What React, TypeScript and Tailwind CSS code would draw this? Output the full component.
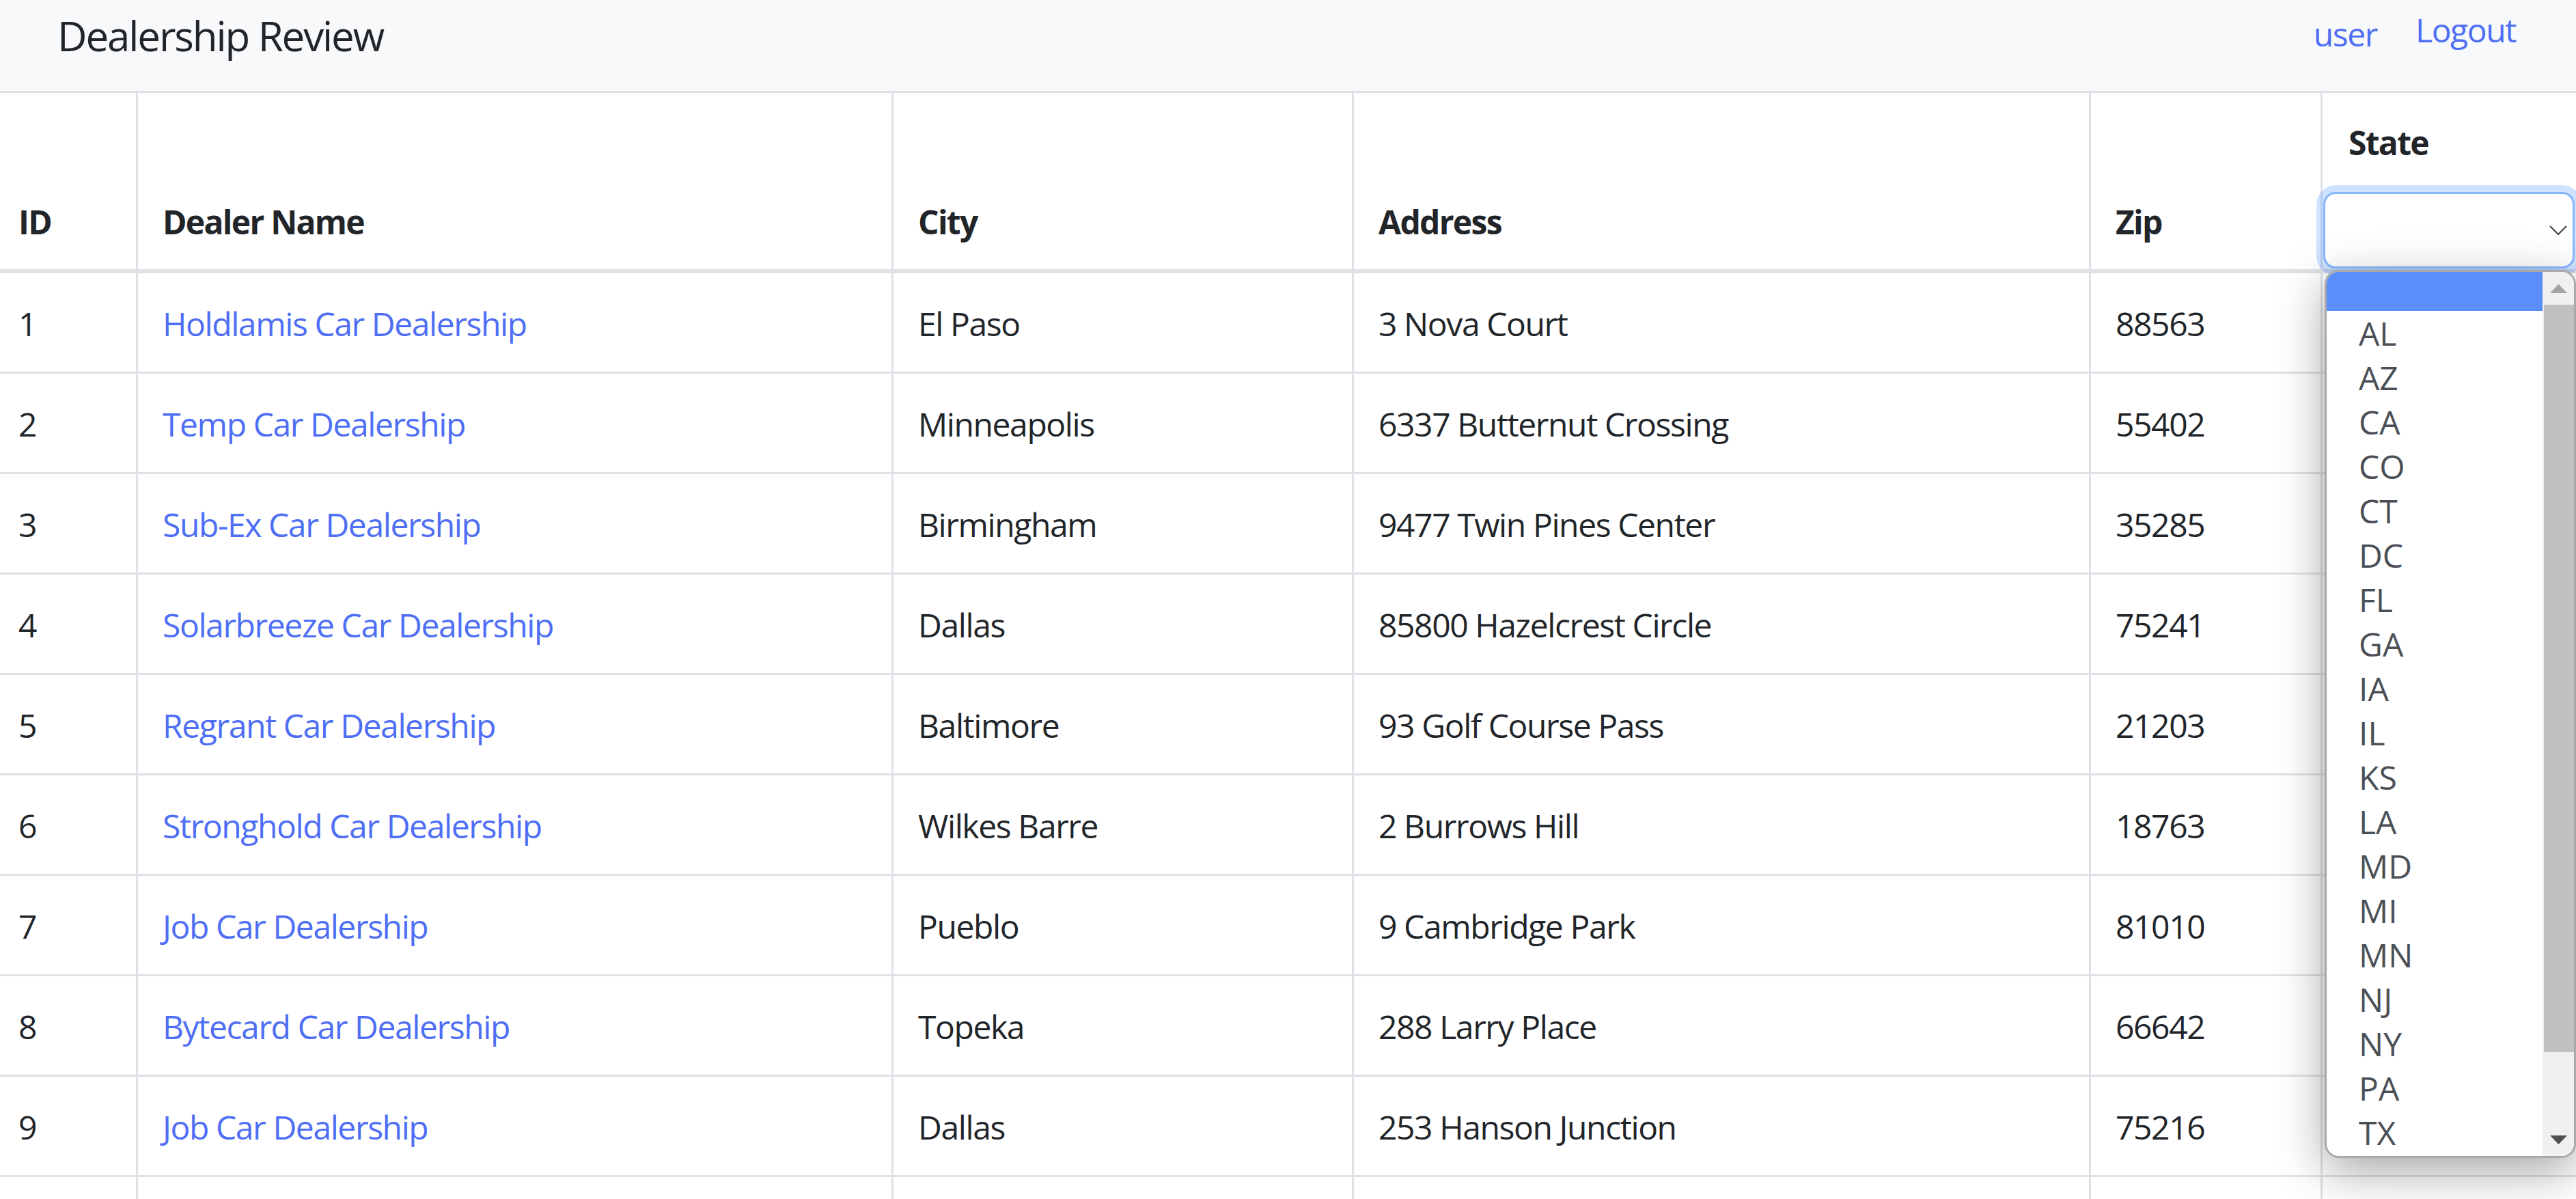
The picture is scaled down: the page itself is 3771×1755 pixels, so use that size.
import React from "react";

interface Dealer {
  id: number;
  name: string;
  city: string;
  address: string;
  zip: string;
  state: string;
}

const dealers: Dealer[] = [
  { id: 1, name: "Holdlamis Car Dealership", city: "El Paso", address: "3 Nova Court", zip: "88563", state: "TX" },
  { id: 2, name: "Temp Car Dealership", city: "Minneapolis", address: "6337 Butternut Crossing", zip: "55402", state: "MN" },
  { id: 3, name: "Sub-Ex Car Dealership", city: "Birmingham", address: "9477 Twin Pines Center", zip: "35285", state: "AL" },
  { id: 4, name: "Solarbreeze Car Dealership", city: "Dallas", address: "85800 Hazelcrest Circle", zip: "75241", state: "TX" },
  { id: 5, name: "Regrant Car Dealership", city: "Baltimore", address: "93 Golf Course Pass", zip: "21203", state: "MD" },
  { id: 6, name: "Stronghold Car Dealership", city: "Wilkes Barre", address: "2 Burrows Hill", zip: "18763", state: "PA" },
  { id: 7, name: "Job Car Dealership", city: "Pueblo", address: "9 Cambridge Park", zip: "81010", state: "CO" },
  { id: 8, name: "Bytecard Car Dealership", city: "Topeka", address: "288 Larry Place", zip: "66642", state: "KS" },
  { id: 9, name: "Job Car Dealership", city: "Dallas", address: "253 Hanson Junction", zip: "75216", state: "TX" },
  { id: 10, name: "Domainer Car Dealership", city: "Kansas City", address: "1 Kenwood Way", zip: "66112", state: "KS" },
];

const states = ["AL", "AZ", "CA", "CO", "CT", "DC", "FL", "GA", "IA", "IL", "KS", "LA", "MD", "MI", "MN", "NJ", "NY", "PA", "TX"];

const cell = "px-[36px] pt-[38px] pb-[34px] border-b-[3px] border-[#dee2e6] text-[48px] leading-[72px] align-middle whitespace-nowrap";
const head = "px-[36px] pb-[33px] border-b-[6px] border-[#dee2e6] text-[48px] leading-[72px] tracking-[-1.7px] align-bottom text-left font-bold whitespace-nowrap";

function StateDropdown() {
  return (
    <div className="absolute left-[3403px] top-[395px] w-[368px] h-[1300px] flex overflow-hidden rounded-[21px] border-[3px] border-[#a9a9a9] bg-white shadow-[0_20px_70px_rgba(0,0,0,0.35)]">
      {/* options */}
      <div className="w-[316px] flex flex-col">
        <div className="h-[57px] shrink-0 bg-[#5b8ef8]" />
        {states.map((s) => (
          <div key={s} className="h-[65px] shrink-0 pl-[47px] text-[48px] leading-[65px] tracking-normal text-[#4a4f56] font-['Open_Sans',sans-serif]">
            {s}
          </div>
        ))}
      </div>
      {/* scrollbar */}
      <div className="flex-1 flex flex-col bg-[#f0f0f0]">
        <div className="h-[48px] flex items-center justify-center">
          <svg width="25" height="13" viewBox="0 0 25 13">
            <polygon points="0,13 12.5,0 25,13" fill="#a3a3a3" />
          </svg>
        </div>
        <div className="h-[1094px] ml-[2px] bg-[#c1c1c1]" />
        <div className="flex-1" />
        <div className="h-[48px] flex items-center justify-center">
          <svg width="25" height="13" viewBox="0 0 25 13">
            <polygon points="0,0 25,0 12.5,13" fill="#505050" />
          </svg>
        </div>
      </div>
    </div>
  );
}

export default function App() {
  return (
    <div className="relative w-[3771px] h-[1755px] overflow-hidden bg-white text-[#212529] tracking-[-1.4px] font-['Segoe_UI','Open_Sans',sans-serif]">
      {/* Navbar */}
      <nav className="flex h-[136px] bg-[#f8f9fa] border-b-[3px] border-[#dee2e6]">
        <div className="pl-[84px] mt-[7px] text-[60px] leading-[90px] tracking-[-2.1px] whitespace-nowrap">Dealership Review</div>
        <div className="flex-1" />
        <a className="mt-[14px] text-[48px] leading-[72px] text-[#4d6ef5]">user</a>
        <a className="ml-[56px] mr-[88px] mt-[8px] text-[48px] leading-[72px] text-[#4d6ef5]">Logout</a>
      </nav>

      {/* Dealers table */}
      <table className="table-fixed border-separate border-spacing-0 w-[3771px]">
        <colgroup>
          <col className="w-[199px]" />
          <col className="w-[1106px]" />
          <col className="w-[674px]" />
          <col className="w-[1079px]" />
          <col className="w-[339px]" />
          <col className="w-[374px]" />
        </colgroup>
        <thead>
          <tr>
            <th className={`${head} pl-[27px]`}>ID</th>
            <th className={`${head} border-l-[3px]`}>Dealer Name</th>
            <th className={`${head} border-l-[3px]`}>City</th>
            <th className={`${head} border-l-[3px]`}>Address</th>
            <th className={`${head} border-l-[3px]`}>Zip</th>
            <th className="pt-[37px] pb-[1px] pl-[1px] pr-0 border-l-[3px] border-b-[6px] border-[#dee2e6] align-top text-left font-bold">
              <div className="pl-[37px] text-[48px] leading-[72px] tracking-[-1.7px]">State</div>
              <div className="relative mt-[36px] h-[112px] w-[368px] flex items-center justify-end pr-[8px] rounded-[18px] border-[3px] border-[#86b7fe] bg-white shadow-[0_0_0_10px_rgba(13,110,253,0.2)]">
                <svg width="26" height="14" viewBox="0 0 26 14" fill="none">
                  <polyline points="1,1 13,13 25,1" stroke="#3a3f44" strokeWidth="2" />
                </svg>
              </div>
            </th>
          </tr>
        </thead>
        <tbody>
          {dealers.map((d) => (
            <tr key={d.id}>
              <td className={`${cell} pl-[27px]`}>{d.id}</td>
              <td className={`${cell} border-l-[3px]`}>
                <a className="text-[#4d6ef5]">{d.name}</a>
              </td>
              <td className={`${cell} border-l-[3px]`}>{d.city}</td>
              <td className={`${cell} border-l-[3px]`}>{d.address}</td>
              <td className={`${cell} border-l-[3px]`}>{d.zip}</td>
              {/* state value sits under the open dropdown */}
              <td className={`${cell} border-l-[3px]`} />
            </tr>
          ))}
        </tbody>
      </table>

      <StateDropdown />
    </div>
  );
}
